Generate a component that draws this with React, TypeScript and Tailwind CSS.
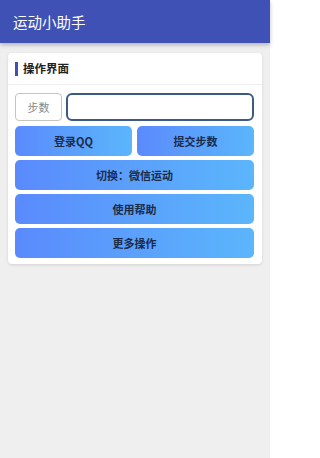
import React from 'react';

const font = { fontFamily: '"Noto Sans CJK SC", "Noto Sans", sans-serif' };

function GradButton({ label, className = '' }: { label: string; className?: string }) {
  return (
    <button
      className={
        'h-[30px] rounded-[5px] bg-gradient-to-r from-[#5a8afd] to-[#5bb6fb] text-[11px] font-bold text-[#1c2b4a] ' +
        className
      }
    >
      {label}
    </button>
  );
}

export default function App() {
  return (
    <div className="min-h-[458px] w-[270px] bg-[#efefef]" style={font}>
      <header className="flex h-[43px] items-center bg-[#3f51b5] px-[13px] shadow-[0_2px_4px_rgba(0,0,0,0.25)]">
        <span className="text-[14.5px] text-white">运动小助手</span>
      </header>
      <div className="px-[8px] pt-[10px]">
        <div className="rounded-[4px] bg-white shadow-[0_1px_3px_rgba(0,0,0,0.12)]">
          <div className="flex h-[32px] items-center gap-[5px] border-b border-[#eeeeee] px-[7px]">
            <span className="h-[14px] w-[3px] bg-[#3f51b5]" />
            <span className="text-[11.5px] font-bold text-[#222]">操作界面</span>
          </div>
          <div className="flex flex-col gap-[4px] pb-[6px] pl-[7px] pr-[8px] pt-[8px]">
            <div className="mb-[1px] flex gap-[4px]">
              <div className="flex h-[28px] w-[47px] items-center justify-center rounded-[4px] border border-[#c4c4c4] text-[11px] text-[#888]">
                步数
              </div>
              <input className="h-[28px] min-w-0 flex-1 rounded-[6px] border-2 border-[#3b5b82] outline-none" />
            </div>
            <div className="flex gap-[5px]">
              <GradButton label="登录QQ" className="flex-1" />
              <GradButton label="提交步数" className="flex-1" />
            </div>
            <GradButton label="切换：微信运动" />
            <GradButton label="使用帮助" />
            <GradButton label="更多操作" />
          </div>
        </div>
      </div>
    </div>
  );
}
